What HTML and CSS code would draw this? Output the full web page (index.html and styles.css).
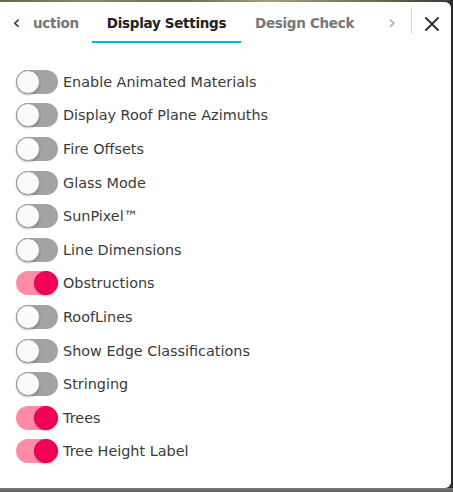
FILE: index.html
```html
<!DOCTYPE html>
<html>
<head>
<meta charset="utf-8">
<link rel="stylesheet" href="styles.css">
</head>
<body>
<div class="backdrop">
  <div class="photo-strip"></div>
  <div class="panel">
    <div class="tabs">
      <span class="arrow left">&#8249;</span>
      <div class="tab-window">
        <span class="tab dim clipped">uction</span>
        <span class="tab active">Display Settings</span>
        <span class="tab dim">Design Check</span>
      </div>
      <span class="arrow right">&#8250;</span>
      <span class="divider"></span>
      <span class="close">
        <svg width="16" height="16" viewBox="0 0 16 16"><path d="M2 2 L14 14 M14 2 L2 14" stroke="#333" stroke-width="2" stroke-linecap="round"/></svg>
      </span>
    </div>
    <ul class="list">
      <li><span class="toggle"></span>Enable Animated Materials</li>
      <li><span class="toggle"></span>Display Roof Plane Azimuths</li>
      <li><span class="toggle"></span>Fire Offsets</li>
      <li><span class="toggle"></span>Glass Mode</li>
      <li><span class="toggle"></span>SunPixel™</li>
      <li><span class="toggle"></span>Line Dimensions</li>
      <li><span class="toggle on"></span>Obstructions</li>
      <li><span class="toggle"></span>RoofLines</li>
      <li><span class="toggle"></span>Show Edge Classifications</li>
      <li><span class="toggle"></span>Stringing</li>
      <li><span class="toggle on"></span>Trees</li>
      <li><span class="toggle on"></span>Tree Height Label</li>
    </ul>
  </div>
</div>
</body>
</html>
```
FILE: styles.css
```css
html, body {
  margin: 0;
  padding: 0;
  background: #262626;
}
.backdrop {
  width: 453px;
  height: 492px;
  background: linear-gradient(180deg, #2a2a2a 0, #2a2a2a 488px, #7a7a76 488px, #5d5d5a 492px);
  overflow: hidden;
}
.photo-strip {
  height: 2px;
  width: 450px;
  background: linear-gradient(90deg, #5e6b4c 0%, #8c8a6a 20%, #6b6a55 40%, #a89c80 60%, #76735c 80%, #3b3b36 100%);
}
.panel {
  width: 451px;
  height: 486px;
  background: #fff;
  border-radius: 0 6px 6px 0;
  font-family: "DejaVu Sans", sans-serif;
  color: #333;
  box-sizing: border-box;
}
.tabs {
  height: 41px;
  display: flex;
  align-items: center;
}
.arrow {
  font-size: 20px;
  line-height: 1;
  text-align: center;
  padding-bottom: 2px;
  flex: none;
}
.arrow.left { color: #333; width: 33px; }
.arrow.right { color: #aaa; width: 34px; margin-right: 2px; }
.tab-window {
  display: flex;
  align-self: stretch;
  overflow: hidden;
  width: 342px;
  flex: none;
}
.tab {
  display: flex;
  align-items: center;
  padding-top: 2px;
  font-weight: bold;
  font-size: 13.5px;
  letter-spacing: -0.3px;
  white-space: nowrap;
  border-bottom: 2px solid transparent;
  box-sizing: border-box;
  flex: none;
}
.tab.dim { color: #777; }
.tab.clipped {
  width: 59px;
}
.tab.active {
  color: #222;
  width: 149px;
  justify-content: center;
  border-bottom-color: #00b8c8;
}
.tab.active + .tab { padding-left: 14px; }
.divider {
  width: 1px;
  height: 27px;
  background: #d6d6d6;
  flex: none;
  margin-top: -4px;
}
.close {
  display: flex;
  align-items: center;
  justify-content: center;
  width: 44px;
  padding-top: 2px;
}
.list {
  list-style: none;
  margin: 0;
  padding: 22px 0 0 16px;
}
.list li {
  display: flex;
  align-items: center;
  height: 33.6px;
  font-size: 14.4px;
  letter-spacing: 0;
  color: #3a3a3a;
}
.toggle {
  position: relative;
  width: 42px;
  height: 24px;
  border-radius: 12px;
  background: #a3a3a3;
  margin-right: 5px;
  flex: none;
}
.toggle::after {
  content: "";
  position: absolute;
  left: 0;
  top: 0;
  width: 24px;
  height: 24px;
  border-radius: 50%;
  background: #fafafa;
  box-sizing: border-box;
  border: 1px solid #9a9a9a;
  box-shadow: 0 1px 2px rgba(0,0,0,0.25);
}
.toggle.on {
  background: #ff8ba6;
}
.toggle.on::after {
  left: 18px;
  background: #f50057;
  border-color: #d8004c;
}
```
